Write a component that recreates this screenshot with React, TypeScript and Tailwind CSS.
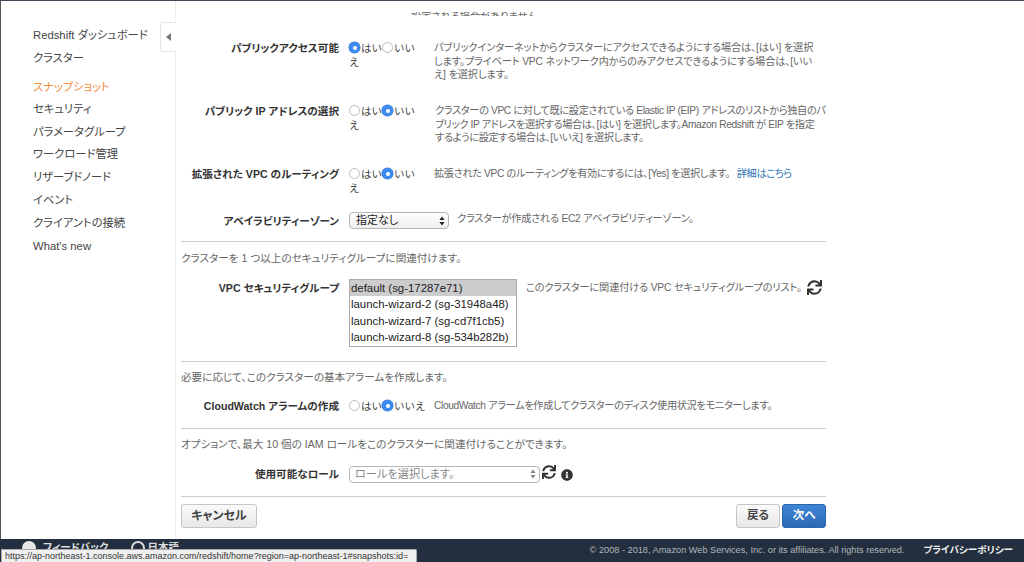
import type { ReactNode } from "react"
import { FaInfoCircle, FaSync } from "react-icons/fa"

const navItems = [
  { label: "Redshift ダッシュボード", className: "h-[22px]" },
  { label: "クラスター", className: "h-[24px] mb-[7px]" },
  { label: "スナップショット", className: "h-[21px] text-[#f58a3c]" },
  { label: "セキュリティ", className: "h-[23px]" },
  { label: "パラメータグループ", className: "h-[22.5px]" },
  { label: "ワークロード管理", className: "h-[22.5px]" },
  { label: "リザーブドノード", className: "h-[23px]" },
  { label: "イベント", className: "h-[23px]" },
  { label: "クライアントの接続", className: "h-[22.5px]" },
  { label: "What's new", className: "h-[23px] text-[10.8px]" },
]

function Radio({ checked }: { checked?: boolean }) {
  return checked ? (
    <span className="inline-block h-[11px] w-[11px] rounded-full bg-[#3f8cf0] align-[-1px] shadow-[0_0_0_0.5px_#3478d8]">
      <span className="mx-auto mt-[3.5px] block h-[4px] w-[4px] rounded-full bg-white" />
    </span>
  ) : (
    <span className="inline-block h-[11px] w-[11px] rounded-full border border-[#bbbbbb] bg-white align-[-1px]" />
  )
}

function YesNo({ yes, wide }: { yes?: boolean; wide?: boolean }) {
  return (
    <div className={`text-[10.5px] leading-[14px] text-[#444444] [font-feature-settings:normal] ${wide ? "w-[80px] whitespace-nowrap" : "w-[76px] [word-break:break-all]"}`}>
      <Radio checked={yes} />
      <span className="ml-[1px]">はい</span>
      <Radio checked={!yes} />
      <span className="ml-[1px]">いいえ</span>
    </div>
  )
}

function Row({ label, className, children }: { label: string; className: string; children: ReactNode }) {
  return (
    <div className={`flex ${className}`}>
      <div className="w-[158px] shrink-0 text-right text-[10.6px] font-bold leading-[14px] text-[#333333]">{label}</div>
      <div className="ml-[10px] flex min-w-0 flex-1">{children}</div>
    </div>
  )
}

function Note({ className, children }: { className?: string; children: ReactNode }) {
  return <div className={`whitespace-nowrap text-[10.2px] leading-[13.6px] text-[#666666] ${className ?? ""}`}>{children}</div>
}

function SectionNote({ className, children }: { className: string; children: ReactNode }) {
  return <div className={`text-[10.6px] leading-[13.6px] text-[#666666] ${className}`}>{children}</div>
}

function SelectArrows({ muted }: { muted?: boolean }) {
  return (
    <svg width="6" height="10" viewBox="0 0 6 10" className="shrink-0">
      <path d="M3 0.5 L5.6 4 H0.4 Z M3 9.5 L5.6 6 H0.4 Z" fill={muted ? "#888888" : "#222222"} />
    </svg>
  )
}

function Sidebar() {
  return (
    <aside className="relative w-[175px] shrink-0 border-r border-[#eeeeee] pl-[32px] pt-[23px]">
      {navItems.map((item) => (
        <div key={item.label} className={`flex items-center whitespace-nowrap text-[11.3px] text-[#444444] ${item.className}`}>
          {item.label}
        </div>
      ))}
      <div className="absolute left-[159px] top-[21px] flex h-[30px] w-[16px] items-center rounded-l-[3px] border border-r-0 border-[#e5e5e5] bg-white pl-[5px]">
        <svg width="5" height="8" viewBox="0 0 5 8">
          <path d="M5 0 L0 4 L5 8 Z" fill="#777777" />
        </svg>
      </div>
    </aside>
  )
}

function Form() {
  return (
    <main className="ml-[5px] w-[645px]">
      <div className="ml-[230px] mt-[11px] flex h-[4px] items-end overflow-hidden text-[10.2px] leading-[10px] text-[#666666]">
        <span className="translate-y-[6px] whitespace-nowrap">設定される場合がありません</span>
      </div>

      <Row label="パブリックアクセス可能" className="mt-[25px] h-[63px]">
        <YesNo yes />
        <Note className="ml-[9px] tracking-[-0.12px]">
          パブリックインターネットからクラスターにアクセスできるようにする場合は、[はい] を選択
          <br />
          します。プライベート VPC ネットワーク内からのみアクセスできるようにする場合は、[いい
          <br />
          え] を選択します。
        </Note>
      </Row>
      <Row label="パブリック IP アドレスの選択" className="h-[63px]">
        <YesNo />
        <Note className="ml-[10px] tracking-[-0.36px]">
          クラスターの VPC に対して既に設定されている Elastic IP (EIP) アドレスのリストから独自のパ
          <br />
          ブリック IP アドレスを選択する場合は、[はい] を選択します。Amazon Redshift が EIP を指定
          <br />
          するように設定する場合は、[いいえ] を選択します。
        </Note>
      </Row>
      <Row label="拡張された VPC のルーティング" className="h-[39px]">
        <YesNo />
        <Note className="ml-[9px] tracking-[-0.35px]">
          拡張された VPC のルーティングを有効にするには、[Yes] を選択します。
          <span className="ml-[7px] text-[#2f74b5]">詳細はこちら</span>
        </Note>
      </Row>
      <Row label="アベイラビリティーゾーン" className="h-[29px] items-center">
        <div className="flex h-[17px] w-[100px] shrink-0 items-center justify-between rounded-[4px] border border-[#b5b5b5] bg-gradient-to-b from-white to-[#eeeeee] pl-[6px] pr-[3px] text-[11px] text-[#222222]">
          指定なし
          <SelectArrows />
        </div>
        <Note className="ml-[8px] tracking-[-0.25px]">クラスターが作成される EC2 アベイラビリティーゾーン。</Note>
      </Row>

      <div className="mt-[6px] border-t border-[#cccccc]" />
      <SectionNote className="mt-[10px]">クラスターを 1 つ以上のセキュリティグループに関連付けます。</SectionNote>

      <Row label="VPC セキュリティグループ" className="mt-[13px] h-[68px] pt-[2px]">
        <div className="-mt-[2px] h-[68px] w-[168px] shrink-0 border border-[#aaaaaa] text-[11.4px] leading-[16.5px] text-[#222222]">
          <div className="bg-[#cccccc] pl-[1px]">default (sg-17287e71)</div>
          <div className="pl-[1px]">launch-wizard-2 (sg-31948a48)</div>
          <div className="pl-[1px]">launch-wizard-7 (sg-cd7f1cb5)</div>
          <div className="pl-[1px]">launch-wizard-8 (sg-534b282b)</div>
        </div>
        <Note className="ml-[9px] tracking-[-0.15px]">このクラスターに関連付ける VPC セキュリティグループのリスト。</Note>
        <FaSync className="-mt-[1px] ml-[5px] shrink-0 text-[15px] text-[#333333]" />
      </Row>

      <div className="mt-[14px] border-t border-[#cccccc]" />
      <SectionNote className="mt-[9px]">必要に応じて、このクラスターの基本アラームを作成します。</SectionNote>

      <Row label="CloudWatch アラームの作成" className="mt-[15px] h-[16px]">
        <YesNo wide />
        <Note className="ml-[5px] tracking-[-0.35px]">CloudWatch アラームを作成してクラスターのディスク使用状況をモニターします。</Note>
      </Row>

      <div className="mt-[13px] border-t border-[#cccccc]" />
      <SectionNote className="mt-[9px]">オプションで、最大 10 個の IAM ロールをこのクラスターに関連付けることができます。</SectionNote>

      <Row label="使用可能なロール" className="mt-[14px] h-[17px] items-center">
        <div className="flex h-[17px] w-[191px] shrink-0 items-center justify-between rounded-[4px] border border-[#b5b5b5] bg-white pl-[5px] pr-[3px] text-[11.2px] text-[#888888]">
          ロールを選択します。
          <SelectArrows muted />
        </div>
        <FaSync className="-mt-[1px] ml-[2px] shrink-0 text-[14px] text-[#333333]" />
        <FaInfoCircle className="ml-[5px] mt-[3px] shrink-0 text-[12px] text-[#333333]" />
      </Row>

      <div className="mt-[13px] border-t border-[#cccccc]" />
      <div className="mt-[7px] flex justify-between">
        <button className="h-[24px] w-[76px] rounded-[3px] border border-[#c6c6c6] bg-gradient-to-b from-[#fafafa] to-[#e8e8e8] text-[12px] font-bold text-[#444444]">
          キャンセル
        </button>
        <div className="flex gap-[2px]">
          <button className="h-[24px] w-[44px] rounded-[3px] border border-[#c6c6c6] bg-gradient-to-b from-[#fafafa] to-[#e8e8e8] text-[11.5px] font-bold text-[#444444]">
            戻る
          </button>
          <button className="h-[24px] w-[44px] rounded-[3px] border border-[#2b66ab] bg-gradient-to-b from-[#3f86d6] to-[#2a69b5] text-[11.5px] font-bold text-white">
            次へ
          </button>
        </div>
      </div>
    </main>
  )
}

function Footer() {
  return (
    <footer className="relative flex h-[23px] items-center bg-[#232f3e] pr-[11px]">
      <div className="ml-[22px] flex h-[18px] -translate-y-[3px] items-center text-[10.5px] font-bold text-[#dddddd]">
        <span className="h-[14px] w-[14px] rounded-full bg-[#e8e8e8]" />
        <span className="ml-[7px]">フィードバック</span>
        <span className="ml-[22px] h-[14px] w-[14px] rounded-full border-2 border-[#dddddd]" />
        <span className="ml-[3px]">日本語</span>
      </div>
      <div className="ml-auto flex items-center text-[9.2px] text-[#b0b6bd]">
        © 2008 - 2018, Amazon Web Services, Inc. or its affiliates. All rights reserved.
        <span className="ml-[19px] text-[9.6px] font-bold text-[#eeeeee]">プライバシーポリシー</span>
      </div>
      <div className="absolute bottom-0 left-[1px] h-[13px] w-[416px] whitespace-nowrap rounded-tr-[2px] border border-b-0 border-[#aaaaaa] bg-[#f0f0f0] pl-[3px] text-[9px] leading-[13px] text-[#333333]">
        https://ap-northeast-1.console.aws.amazon.com/redshift/home?region=ap-northeast-1#snapshots:id=
      </div>
    </footer>
  )
}

export default function App() {
  return (
    <div
      className="flex h-[562px] w-[1024px] flex-col overflow-hidden border-t border-[#3f4a58] bg-white [font-feature-settings:'palt']"
      style={{ fontFamily: '"Liberation Sans", "Noto Sans CJK JP", sans-serif' }}
    >
      <div className="flex h-[538px] border-l border-[#555555]">
        <Sidebar />
        <Form />
      </div>
      <Footer />
    </div>
  )
}
